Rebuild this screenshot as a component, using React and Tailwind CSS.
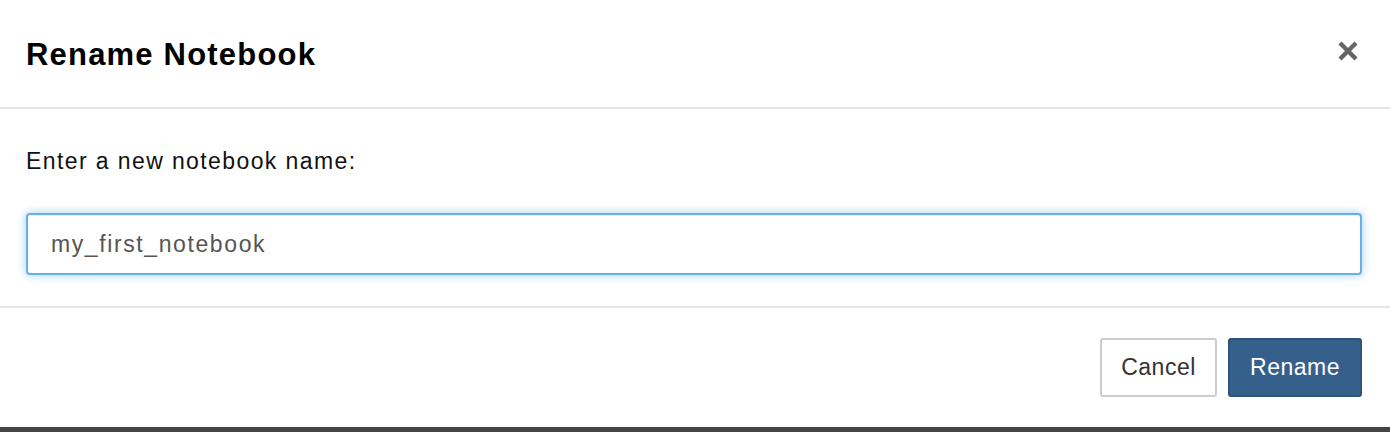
export default function App() {
  return (
    <div className="w-[1390px] h-[432px] flex flex-col bg-white font-['Liberation_Sans',Arial,sans-serif] text-black">
      {/* header */}
      <div className="h-[109px] shrink-0 flex items-center justify-between pl-[26px] pr-[31px] border-b-2 border-[#e5e5e5]">
        <h1 className="text-[31px] font-bold leading-none tracking-[1.2px] mt-[1px]">Rename Notebook</h1>
        <button className="w-[22px] h-[22px] -mt-[5px] flex items-center justify-center text-[#666]">
          <svg width="22" height="22" viewBox="0 0 22 22">
            <path d="M3 3 L19 19 M19 3 L3 19" stroke="currentColor" strokeWidth="4.4" strokeLinecap="butt" />
          </svg>
        </button>
      </div>

      {/* body */}
      <div className="h-[199px] shrink-0 px-[26px] pt-[36px] border-b-2 border-[#e5e5e5]">
        <p className="text-[23px] leading-[32px] tracking-[1.4px] text-[#111]">Enter a new notebook name:</p>
        <input
          defaultValue="my_first_notebook"
          className="mt-[36px] w-[1336px] h-[62px] px-[23px] text-[23px] tracking-[1.6px] text-[#555] bg-white border-2 border-[#66afe9] rounded-[4px] outline-none shadow-[inset_0_1px_1px_rgba(0,0,0,0.075),0_0_10px_rgba(102,175,233,0.6)] font-['Liberation_Sans',Arial,sans-serif]"
        />
      </div>

      {/* footer */}
      <div className="flex-1 flex justify-end items-start gap-[11px] pt-[30px] pr-[28px]">
        <button className="w-[117px] h-[59px] border-2 border-[#ccc] rounded-[3px] bg-white text-[23px] tracking-[0.5px] text-[#333]">
          Cancel
        </button>
        <button className="w-[134px] h-[59px] border-2 border-[#2e5479] rounded-[3px] bg-[#36608c] text-[23px] tracking-[0.5px] text-white">
          Rename
        </button>
      </div>

      <div className="h-[5px] shrink-0 bg-[#444]" />
    </div>
  );
}
